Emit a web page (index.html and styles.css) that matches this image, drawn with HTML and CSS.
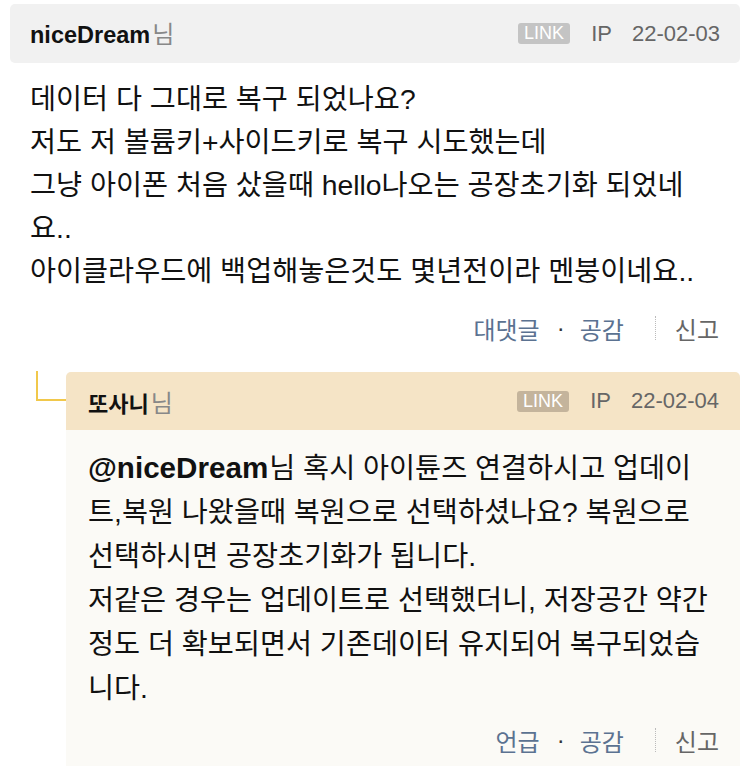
FILE: index.html
```html
<!DOCTYPE html>
<html lang="ko">
<head>
    <meta charset="UTF-8">
    <meta name="viewport" content="width=device-width, initial-scale=1.0">
    <title>댓글</title>
    <link rel="stylesheet" href="styles.css">
</head>
<body>
    <div class="comment-list">
        <div class="comment">
            <div class="comment-head">
                <div class="nick"><strong>niceDream</strong><span class="sir">님</span></div>
                <div class="meta">
                    <span class="badge">LINK</span>
                    <span class="ip">IP</span>
                    <span class="date">22-02-03</span>
                </div>
            </div>
            <div class="comment-body">
                데이터 다 그대로 복구 되었나요?<br>
                저도 저 볼륨키+사이드키로 복구 시도했는데<br>
                그냥 아이폰 처음 샀을때 hello나오는 공장초기화 되었네요..<br>
                아이클라우드에 백업해놓은것도 몇년전이라 멘붕이네요..
            </div>
            <div class="actions">
                <a class="act" href="#">대댓글</a>
                <span class="dot">·</span>
                <a class="act" href="#">공감</a>
                <span class="bar"></span>
                <a class="act report" href="#">신고</a>
            </div>
        </div>

        <div class="comment reply">
            <div class="comment-head">
                <div class="nick"><strong>또사니</strong><span class="sir">님</span></div>
                <div class="meta">
                    <span class="badge">LINK</span>
                    <span class="ip">IP</span>
                    <span class="date">22-02-04</span>
                </div>
            </div>
            <div class="comment-body">
                <strong class="mention">@niceDream</strong>님 혹시 아이튠즈 연결하시고 업데이트,복원 나왔을때 복원으로 선택하셨나요? 복원으로 선택하시면 공장초기화가 됩니다.<br>
                저같은 경우는 업데이트로 선택했더니, 저장공간 약간 정도 더 확보되면서 기존데이터 유지되어 복구되었습니다.
            </div>
            <div class="actions">
                <a class="act" href="#">언급</a>
                <span class="dot">·</span>
                <a class="act" href="#">공감</a>
                <span class="bar"></span>
                <a class="act report" href="#">신고</a>
            </div>
        </div>
    </div>
</body>
</html>
```

FILE: styles.css
```css
body {
    margin: 0;
    background-color: #fff;
    color: #111;
    font-family: "Liberation Sans", "Noto Sans CJK KR", sans-serif;
}

.comment-list {
    padding: 4px 10px 0;
}

.comment-head {
    display: flex;
    justify-content: space-between;
    align-items: center;
    height: 59px;
    padding: 0 20px;
    background-color: #f1f1f1;
    border-radius: 5px;
}

.nick {
    margin-top: -2px;
    font-size: 23.5px;
}

.nick strong {
    font-weight: bold;
    color: #111;
}

.reply .nick {
    margin-top: 0;
    font-size: 22px;
}

.sir {
    margin-left: 2px;
    font-size: 24px;
    color: #888;
}

.meta {
    display: flex;
    align-items: center;
    font-size: 22px;
    color: #666;
}

.ip {
    margin: 0 20px 0 21px;
}

.badge {
    padding: 0 6px;
    line-height: 21px;
    font-size: 18px;
    color: #fff;
    background-color: #c4c4c4;
    border-radius: 3px;
}

.comment-body {
    padding: 15px 40px 0 20px;
    font-size: 28.3px;
    line-height: 43px;
    word-break: break-all;
}

.mention {
    margin-right: 1px;
    font-size: 29.6px;
    line-height: 1;
}

.actions {
    display: flex;
    justify-content: flex-end;
    align-items: center;
    height: 44px;
    padding: 13px 21px 0;
    font-size: 24px;
}

.act {
    color: #5b7291;
    text-decoration: none;
}

.act.report {
    color: #666;
}

.dot {
    margin: 0 15px 0 17px;
    color: #333;
}

.bar {
    width: 0;
    height: 24px;
    margin: 0 19px 0 31px;
    border-left: 1px dotted #bbb;
}

/* reply */
.reply {
    position: relative;
    margin: 22px 0 0 56px;
    background-color: #fbfaf6;
    border-radius: 5px 5px 0 0;
}

.reply::before {
    content: "";
    position: absolute;
    left: -30px;
    top: -1px;
    width: 28px;
    height: 28px;
    border-left: 2px solid #f1c84b;
    border-bottom: 2px solid #f1c84b;
}

.reply .comment-head {
    height: 58px;
    padding: 0 21px 0 22px;
    background-color: #f5e4c6;
    border-radius: 5px 5px 0 0;
}

.reply .badge {
    background-color: #c4b49c;
}

.reply .comment-body {
    padding: 16px 27px 0 22px;
    line-height: 44px;
}

.reply .actions {
    padding-top: 8px;
    padding-bottom: 10px;
}
```
